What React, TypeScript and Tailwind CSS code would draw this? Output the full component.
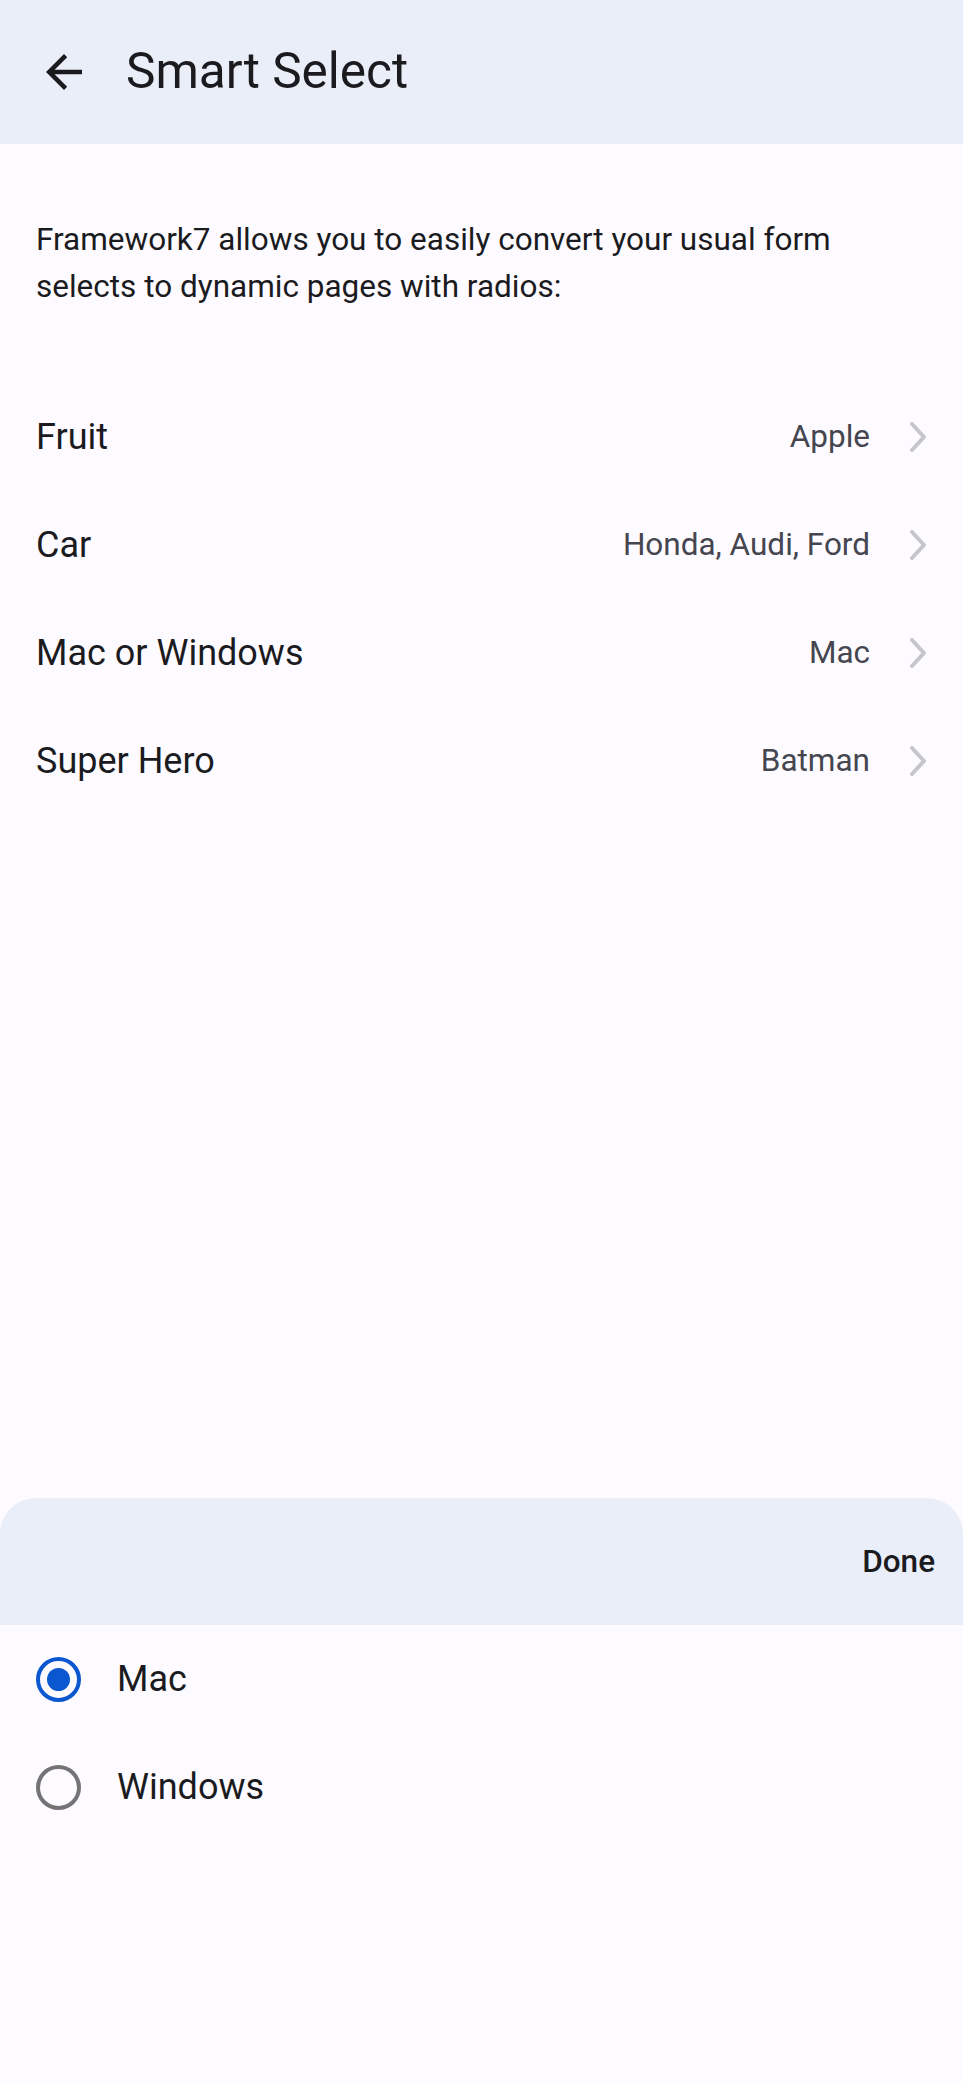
import React from "react";

const items = [
  { label: "Fruit", value: "Apple" },
  { label: "Car", value: "Honda, Audi, Ford" },
  { label: "Mac or Windows", value: "Mac" },
  { label: "Super Hero", value: "Batman" },
];

const options = [
  { label: "Mac", checked: true },
  { label: "Windows", checked: false },
];

function BackArrow() {
  return (
    <svg width="54" height="54" viewBox="0 0 24 24" fill="#1b1b1f">
      <path d="M20 11H7.83l5.59-5.59L12 4l-8 8 8 8 1.41-1.41L7.83 13H20v-2z" />
    </svg>
  );
}

function Chevron() {
  return (
    <svg width="18" height="30" viewBox="0 0 18 30" fill="none">
      <polyline
        points="3,2 15,15 3,28"
        stroke="#c4c6cc"
        strokeWidth="4"
        strokeLinecap="round"
        strokeLinejoin="round"
      />
    </svg>
  );
}

export default function App() {
  return (
    <div
      className="h-[2083px] flex flex-col bg-[#fdfbff] text-[#1b1b1f] overflow-hidden"
      style={{ fontFamily: "Roboto, 'Noto Sans', sans-serif" }}
    >
      <header className="h-[144px] shrink-0 bg-[#e9eef9] flex items-center pl-[37px]">
        <BackArrow />
        <h1 className="ml-[35px] text-[49.5px] leading-none font-normal">Smart Select</h1>
      </header>

      <div className="mt-[73px] pl-[36px] pr-[37px] text-[31.5px] leading-[46.5px]">
        Framework7 allows you to easily convert your usual form selects to dynamic pages with radios:
      </div>

      <ul className="mt-[73px]">
        {items.map((item) => (
          <li key={item.label} className="h-[108px] flex items-center pl-[36px] pr-[36px]">
            <span className="flex-1 text-[36px]">{item.label}</span>
            <span className="text-[31.5px] text-[#45464f]">{item.value}</span>
            <span className="ml-[39px] flex items-center">
              <Chevron />
            </span>
          </li>
        ))}
      </ul>

      <div className="flex-1" />

      <div className="h-[585px] shrink-0 flex flex-col rounded-t-[36px] overflow-hidden bg-[#fdfbff]">
        <div className="h-[127px] shrink-0 bg-[#e9eef9] flex items-center justify-end pr-[28px]">
          <button className="text-[31.5px] font-medium">Done</button>
        </div>
        <ul>
          {options.map((opt) => (
            <li key={opt.label} className="h-[108px] flex items-center pl-[36px]">
              <span
                className={
                  opt.checked
                    ? "w-[45px] h-[45px] rounded-full border-[4.5px] border-[#0b57d0] flex items-center justify-center"
                    : "w-[45px] h-[45px] rounded-full border-[4.5px] border-[#747474]"
                }
              >
                {opt.checked && <span className="w-[23px] h-[23px] rounded-full bg-[#0b57d0]" />}
              </span>
              <span className="ml-[36px] text-[36px]">{opt.label}</span>
            </li>
          ))}
        </ul>
      </div>
    </div>
  );
}
